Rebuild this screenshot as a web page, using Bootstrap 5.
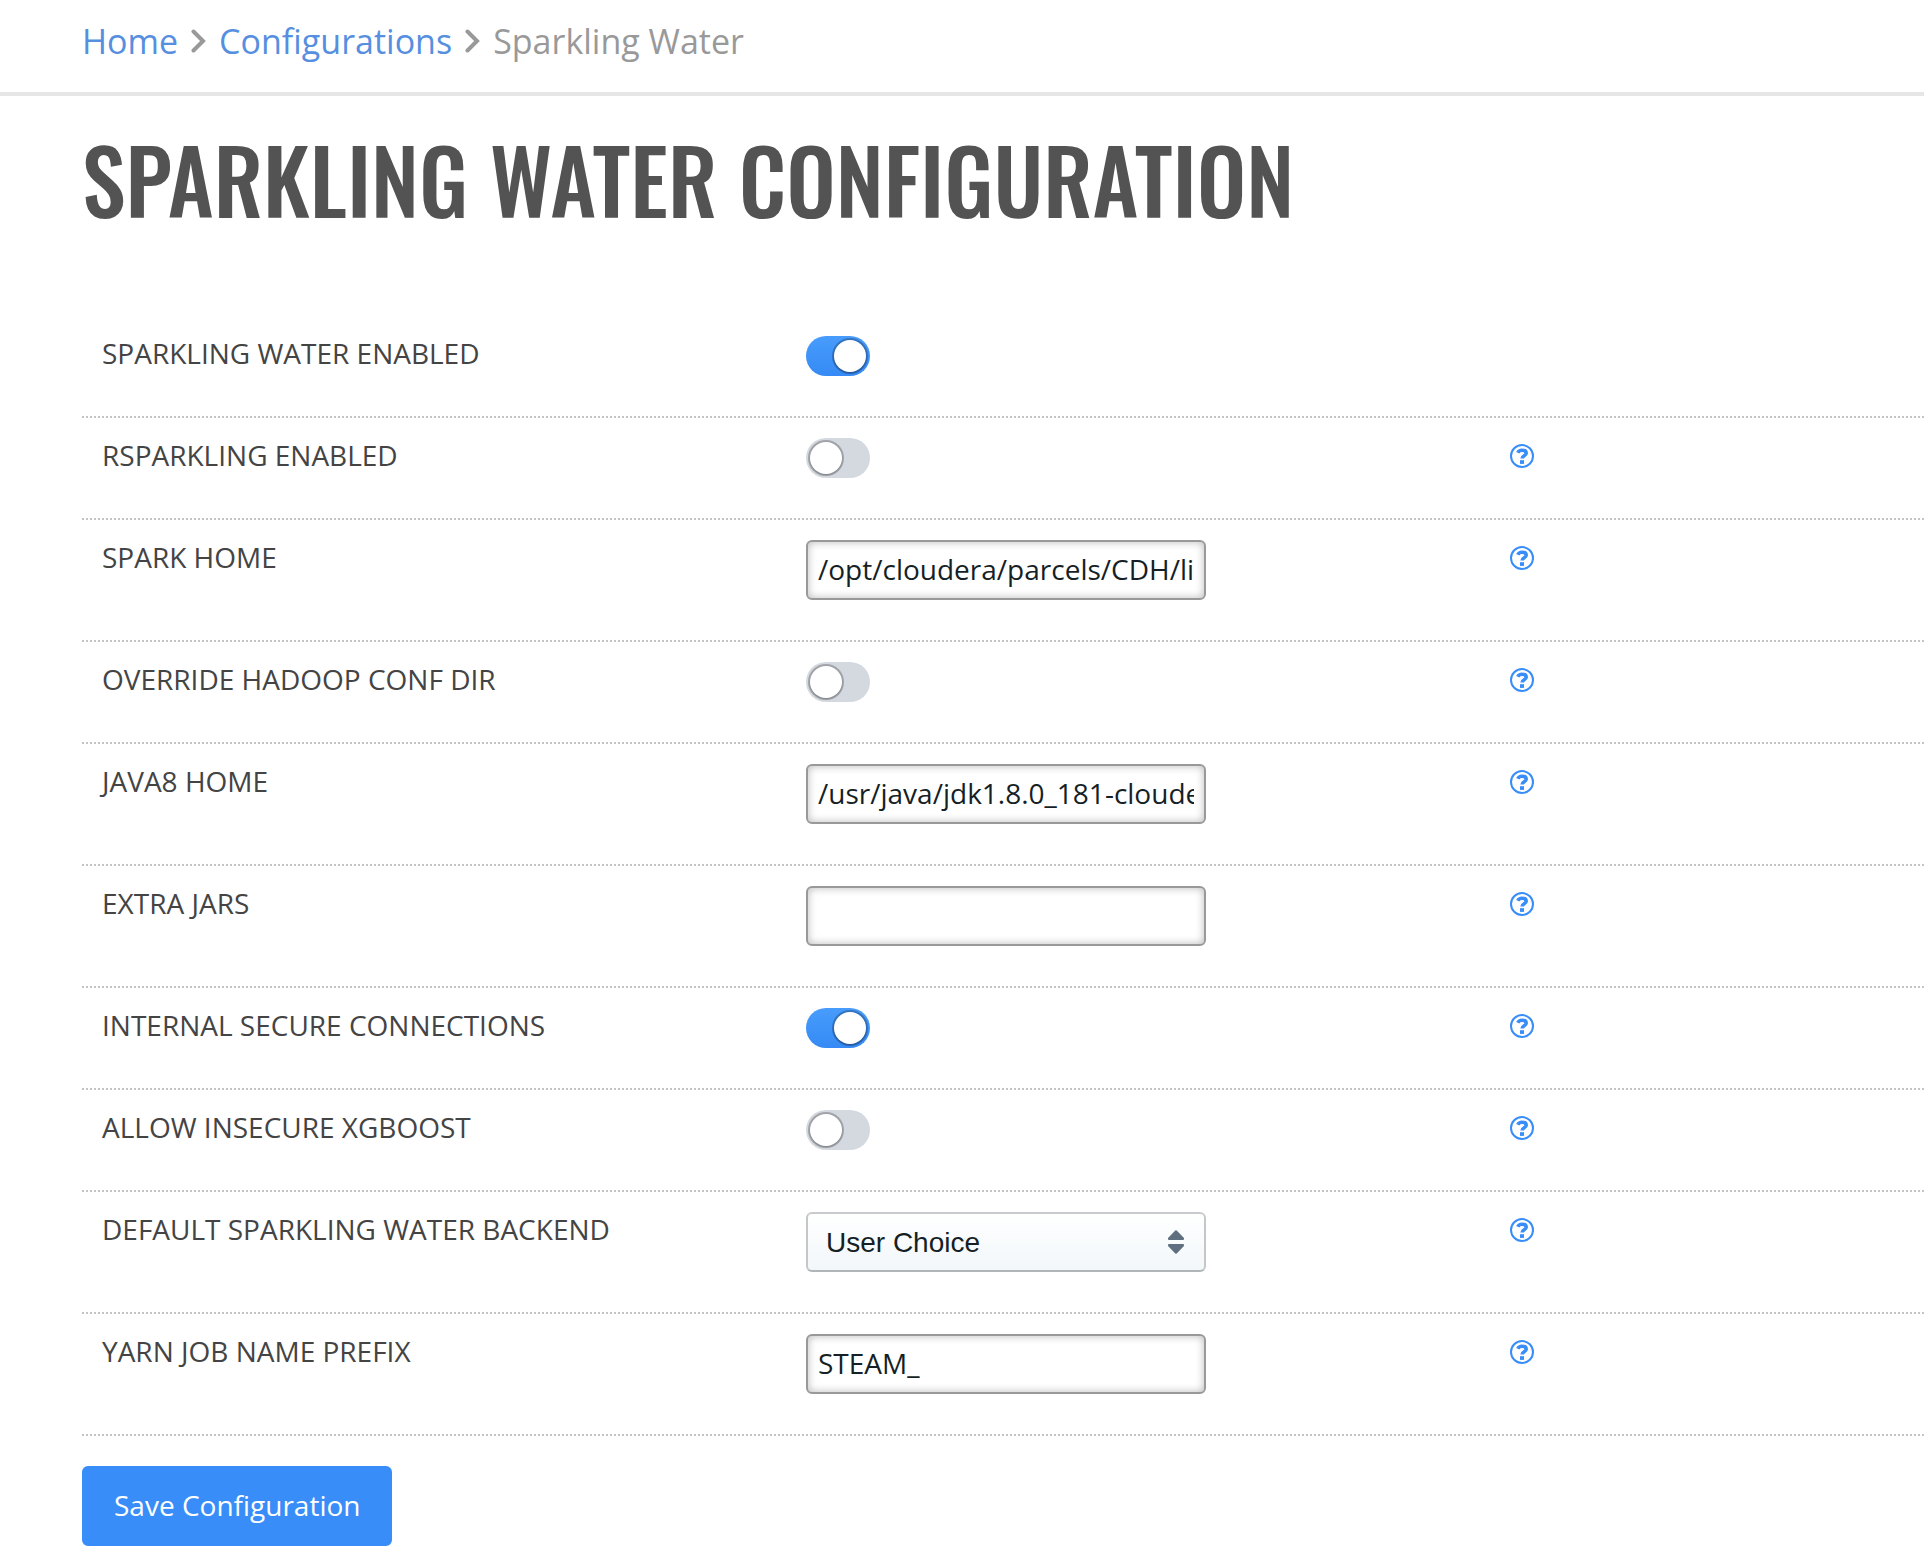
<!DOCTYPE html>
<html lang="en">
<head>
<meta charset="utf-8">
<meta name="viewport" content="width=device-width, initial-scale=1">
<title>Sparkling Water Configuration</title>
<link href="https://cdn.jsdelivr.net/npm/bootstrap@5.3.0/dist/css/bootstrap.min.css" rel="stylesheet">
<style>
  :root { --accent: #388df8; --line: #c4c4c4; --gutter: 82px; }
  body { font-family: "Open Sans", sans-serif; font-size: 28px; line-height: 40px; color: #444; background: #fff; }
  .topbar { border-bottom: 4px solid #e6e6e6; padding: 15px var(--gutter) 25px; }
  .trail { font-size: 34px; line-height: 52px; color: #999; gap: 13px; }
  .trail a { color: #568fdf; }
  .page-title { font-family: Oswald, "Liberation Sans Narrow", "Liberation Sans", sans-serif; font-weight: 500; font-size: 88px; line-height: 100px; color: #535353; margin: 32px 0 88px; }
  .page-body { padding-left: var(--gutter); }
  .setting { border-bottom: 2px dotted var(--line); padding: 20px 0 40px; }
  .setting > * { padding-left: 20px; }
  .setting-name, .setting-field { flex: 0 0 38.22%; }
  .setting-name { line-height: 34px; }
  .field { width: 400px; height: 60px; font-size: 28px; line-height: 36px; color: #161f26; border: 2px solid #999; border-radius: 6px; padding: 9px 10px 11px; box-shadow: inset 0 0 8px rgba(0,0,0,.28); }
  .picker { font-family: "Liberation Sans", sans-serif; padding: 11px 18px 9px; border-color: #c8cbcd #c4c7c9 #b0b5b8; box-shadow: none;
    background: url("data:image/svg+xml,%3Csvg xmlns='http://www.w3.org/2000/svg' viewBox='0 0 16 24'%3E%3Cg fill='%235f6f7f' stroke='%235f6f7f' stroke-width='2' stroke-linejoin='round'%3E%3Cpath d='M1 8.5 8 1.2 15 8.5V9H1zM1 15.5 8 22.8 15 15.5V15H1z'/%3E%3C/g%3E%3C/svg%3E") no-repeat right 20px center / 16px 24px, linear-gradient(#fff, #f2f7fa); }
  .toggle { appearance: none; display: block; width: 64px; height: 40px; margin: 0; padding: 4px; border-radius: 20px; background: #d4d9e0; cursor: pointer; }
  .toggle::before { content: ""; display: block; width: 32px; height: 32px; border-radius: 50%; background: #fff; box-shadow: 0 0 0 2px rgba(0,0,0,.24), 0 1px 2px rgba(0,0,0,.2); }
  .toggle:checked { background: linear-gradient(#479cfc, #368af5); }
  .toggle:checked::before { margin-left: auto; }
  .help { display: block; padding: 0; margin-top: 6px; border: 0; background: none; color: var(--accent); }
  .help svg { display: block; width: 24px; height: 24px; }
  .save { font-size: 28px; line-height: 40px; padding: 17px 30px 19px; border: 2px solid var(--accent); border-radius: 6px; background: var(--accent); color: #fff; margin: 30px 0 22px; }
</style>
<script src="https://cdn.jsdelivr.net/npm/bootstrap@5.3.0/dist/js/bootstrap.bundle.min.js"></script>
</head>
<body>
<svg class="d-none" aria-hidden="true">
  <symbol id="help" viewBox="0 0 24 24">
    <circle cx="12" cy="12" r="11" fill="none" stroke="currentColor" stroke-width="2"/>
    <path d="M7.800 8.700C8.600 7 10 6.200 12 6.200c2.500 0 4.200 1.200 4.200 3.100 0 2.600-4.100 2.500-4.100 5.300" fill="none" stroke="currentColor" stroke-width="3.600"/>
    <path d="M10 16.200h4v3.700h-4z" fill="currentColor"/>
  </symbol>
  <symbol id="chevron" viewBox="0 0 15 24">
    <path d="M2.500 2.500 12 12 2.500 21.500" fill="none" stroke="#999" stroke-width="4" stroke-linecap="round" stroke-linejoin="miter"/>
  </symbol>
</svg>

<header class="topbar">
  <nav class="trail d-flex align-items-center" aria-label="Breadcrumb">
    <a class="text-decoration-none" href="#">Home</a>
    <svg width="15" height="24" aria-hidden="true"><use href="#chevron"/></svg>
    <a class="text-decoration-none" href="#">Configurations</a>
    <svg width="15" height="24" aria-hidden="true"><use href="#chevron"/></svg>
    <span aria-current="page">Sparkling Water</span>
  </nav>
</header>

<main class="page-body">
  <h1 class="page-title text-uppercase">Sparkling Water Configuration</h1>
  <form>
    <div class="setting d-flex align-items-start">
      <label class="setting-name text-uppercase" for="sw">Sparkling Water Enabled</label>
      <div class="setting-field"><input class="toggle" type="checkbox" role="switch" id="sw" checked></div>
    </div>
    <div class="setting d-flex align-items-start">
      <label class="setting-name text-uppercase" for="rs">RSparkling Enabled</label>
      <div class="setting-field"><input class="toggle" type="checkbox" role="switch" id="rs"></div>
      <div><button class="help" type="button" aria-label="Help"><svg><use href="#help"/></svg></button></div>
    </div>
    <div class="setting d-flex align-items-start">
      <label class="setting-name text-uppercase" for="spark">Spark Home</label>
      <div class="setting-field"><input class="field form-control" type="text" id="spark" value="/opt/cloudera/parcels/CDH/lib/spark"></div>
      <div><button class="help" type="button" aria-label="Help"><svg><use href="#help"/></svg></button></div>
    </div>
    <div class="setting d-flex align-items-start">
      <label class="setting-name text-uppercase" for="hadoop">Override Hadoop Conf Dir</label>
      <div class="setting-field"><input class="toggle" type="checkbox" role="switch" id="hadoop"></div>
      <div><button class="help" type="button" aria-label="Help"><svg><use href="#help"/></svg></button></div>
    </div>
    <div class="setting d-flex align-items-start">
      <label class="setting-name text-uppercase" for="java">Java8 Home</label>
      <div class="setting-field"><input class="field form-control" type="text" id="java" value="/usr/java/jdk1.8.0_181-cloudera"></div>
      <div><button class="help" type="button" aria-label="Help"><svg><use href="#help"/></svg></button></div>
    </div>
    <div class="setting d-flex align-items-start">
      <label class="setting-name text-uppercase" for="jars">Extra Jars</label>
      <div class="setting-field"><input class="field form-control" type="text" id="jars"></div>
      <div><button class="help" type="button" aria-label="Help"><svg><use href="#help"/></svg></button></div>
    </div>
    <div class="setting d-flex align-items-start">
      <label class="setting-name text-uppercase" for="secure">Internal Secure Connections</label>
      <div class="setting-field"><input class="toggle" type="checkbox" role="switch" id="secure" checked></div>
      <div><button class="help" type="button" aria-label="Help"><svg><use href="#help"/></svg></button></div>
    </div>
    <div class="setting d-flex align-items-start">
      <label class="setting-name text-uppercase" for="xgb">Allow Insecure XGBoost</label>
      <div class="setting-field"><input class="toggle" type="checkbox" role="switch" id="xgb"></div>
      <div><button class="help" type="button" aria-label="Help"><svg><use href="#help"/></svg></button></div>
    </div>
    <div class="setting d-flex align-items-start">
      <label class="setting-name text-uppercase" for="backend">Default Sparkling Water Backend</label>
      <div class="setting-field"><select class="field picker form-select" id="backend"><option>User Choice</option></select></div>
      <div><button class="help" type="button" aria-label="Help"><svg><use href="#help"/></svg></button></div>
    </div>
    <div class="setting d-flex align-items-start">
      <label class="setting-name text-uppercase" for="yarn">Yarn Job Name Prefix</label>
      <div class="setting-field"><input class="field form-control" type="text" id="yarn" value="STEAM_"></div>
      <div><button class="help" type="button" aria-label="Help"><svg><use href="#help"/></svg></button></div>
    </div>
    <button class="save btn" type="submit">Save Configuration</button>
  </form>
</main>
</body>
</html>
